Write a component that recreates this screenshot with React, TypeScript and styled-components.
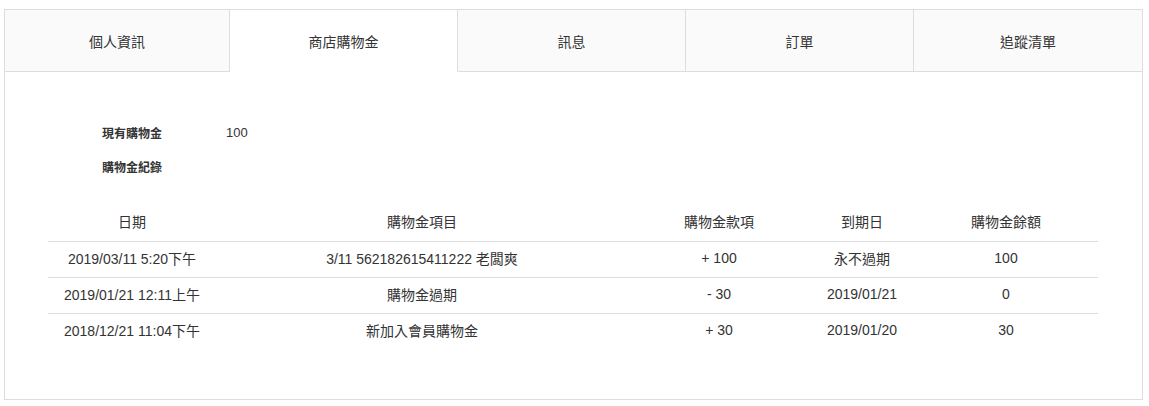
import React from 'react'
import styled, { createGlobalStyle } from 'styled-components'

const GlobalStyle = createGlobalStyle`
    html, body {
        margin: 0;
        padding: 0;
        background: #fff;
    }
    body {
        font-family: "Liberation Sans", "Noto Sans CJK TC", sans-serif;
        color: #333;
    }
`

const Page = styled.div`
    padding: 9px 0 0 4px;
`

const Panel = styled.div`
    box-sizing: border-box;
    width: 1139px;
    height: 391px;
    border: 1px solid #ddd;
`

const TabBar = styled.div`
    display: flex;
`

const Tab = styled.div<{ $active?: boolean; $last?: boolean }>`
    box-sizing: border-box;
    flex: 0 0 228px;
    height: 62px;
    display: flex;
    align-items: center;
    justify-content: center;
    font-size: 14px;
    color: #333;
    background: ${(p) => (p.$active ? '#fff' : '#fafafa')};
    border-bottom: 1px solid ${(p) => (p.$active ? 'transparent' : '#ddd')};
    border-right: ${(p) => (p.$last ? 'none' : '1px solid #ddd')};
    cursor: pointer;

    &:first-child {
        flex: 1 1 auto;
    }
`

const Content = styled.div`
    padding: 43px 43px 0 43px;
`

const InfoList = styled.div`
    margin-left: 54px;
    margin-bottom: 21px;
`

const InfoRow = styled.div`
    display: flex;
    align-items: center;
    height: 34px;
`

const InfoLabel = styled.div`
    width: 124px;
    font-size: 12px;
    font-weight: bold;
`

const InfoValue = styled.div`
    font-size: 13px;
`

const Table = styled.table`
    width: 1050px;
    border-collapse: collapse;
    table-layout: fixed;
    font-size: 14px;
`

const Th = styled.th`
    box-sizing: border-box;
    height: 37px;
    padding: 0 0 3px;
    font-weight: normal;
    text-align: center;
    border-bottom: 1px solid #ddd;
`

const Td = styled.td`
    box-sizing: border-box;
    height: 36px;
    padding: 0 0 2px;
    text-align: center;
`

const Row = styled.tr`
    & + & td {
        border-top: 1px solid #ddd;
    }
`

const tabs = ['個人資訊', '商店購物金', '訊息', '訂單', '追蹤清單']

const columns = [
    { title: '日期', width: 168 },
    { title: '購物金項目', width: 412 },
    { title: '購物金款項', width: 182 },
    { title: '到期日', width: 104 },
    { title: '購物金餘額', width: 184 },
]

const records = [
    ['2019/03/11 5:20下午', '3/11 562182615411222 老闆爽', '+ 100', '永不過期', '100'],
    ['2019/01/21 12:11上午', '購物金過期', '- 30', '2019/01/21', '0'],
    ['2018/12/21 11:04下午', '新加入會員購物金', '+ 30', '2019/01/20', '30'],
]

export default function App() {
    const [active, setActive] = React.useState(1)

    return (
        <Page>
            <GlobalStyle />
            <Panel>
                <TabBar>
                    {tabs.map((t, i) => (
                        <Tab
                            key={t}
                            $active={i === active}
                            $last={i === tabs.length - 1}
                            onClick={() => setActive(i)}
                        >
                            {t}
                        </Tab>
                    ))}
                </TabBar>
                <Content>
                    <InfoList>
                        <InfoRow>
                            <InfoLabel>現有購物金</InfoLabel>
                            <InfoValue>100</InfoValue>
                        </InfoRow>
                        <InfoRow>
                            <InfoLabel>購物金紀錄</InfoLabel>
                        </InfoRow>
                    </InfoList>
                    <Table>
                        <colgroup>
                            {columns.map((c) => (
                                <col key={c.title} style={{ width: c.width }} />
                            ))}
                        </colgroup>
                        <thead>
                            <tr>
                                {columns.map((c) => (
                                    <Th key={c.title}>{c.title}</Th>
                                ))}
                            </tr>
                        </thead>
                        <tbody>
                            {records.map((r) => (
                                <Row key={r[0]}>
                                    {r.map((cell, j) => (
                                        <Td key={j}>{cell}</Td>
                                    ))}
                                </Row>
                            ))}
                        </tbody>
                    </Table>
                </Content>
            </Panel>
        </Page>
    )
}
